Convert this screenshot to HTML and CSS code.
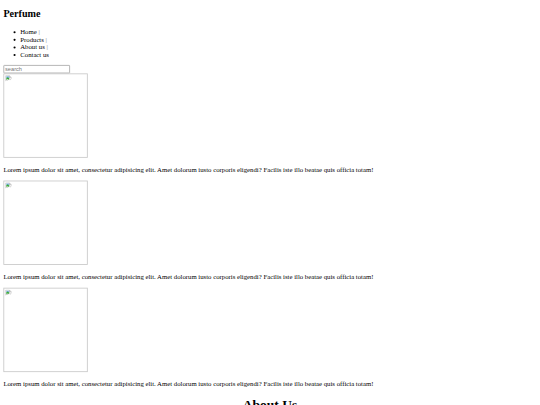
FILE: index.html
```html
<!DOCTYPE html>
<html>
<head>
<meta charset="utf-8">
<title>Perfume</title>
<link rel="stylesheet" href="styles.css">
</head>
<body>
<div class="page">
<header class="site-header">
  <h2 class="brand">Perfume</h2>
  <ul class="nav">
    <li>Home <span class="sep">|</span></li>
    <li>Products <span class="sep">|</span></li>
    <li>About us <span class="sep">|</span></li>
    <li>Contact us</li>
  </ul>
  <input class="search" type="text" placeholder="search">
</header>
<main>
  <div class="product">
    <div class="img-line"><div class="broken"><svg class="broken-icon" viewBox="0 0 16 16" width="16" height="16"><path d="M1.5 1.5h9l4 4v4l-3 2-2-2-3 3-2-1.5-3 2.5z" fill="#fff" stroke="#9a9a9a"/><path d="M3 3h7v4H3z" fill="#7fb2e6"/><path d="M3 7l2.5-2 2.5 2 2-1.5V9L7.5 11l-2-1.5L3 11.5z" fill="#3ea83a"/><path d="M10.5 1.5v4h4" fill="#ddd" stroke="#9a9a9a"/></svg></div></div>
    <p class="desc">Lorem ipsum dolor sit amet, consectetur adipisicing elit. Amet dolorum iusto corporis eligendi? Facilis iste illo beatae quis officia totam!</p>
  </div>
  <div class="product">
    <div class="img-line"><div class="broken"><svg class="broken-icon" viewBox="0 0 16 16" width="16" height="16"><path d="M1.5 1.5h9l4 4v4l-3 2-2-2-3 3-2-1.5-3 2.5z" fill="#fff" stroke="#9a9a9a"/><path d="M3 3h7v4H3z" fill="#7fb2e6"/><path d="M3 7l2.5-2 2.5 2 2-1.5V9L7.5 11l-2-1.5L3 11.5z" fill="#3ea83a"/><path d="M10.5 1.5v4h4" fill="#ddd" stroke="#9a9a9a"/></svg></div></div>
    <p class="desc">Lorem ipsum dolor sit amet, consectetur adipisicing elit. Amet dolorum iusto corporis eligendi? Facilis iste illo beatae quis officia totam!</p>
  </div>
  <div class="product">
    <div class="img-line"><div class="broken"><svg class="broken-icon" viewBox="0 0 16 16" width="16" height="16"><path d="M1.5 1.5h9l4 4v4l-3 2-2-2-3 3-2-1.5-3 2.5z" fill="#fff" stroke="#9a9a9a"/><path d="M3 3h7v4H3z" fill="#7fb2e6"/><path d="M3 7l2.5-2 2.5 2 2-1.5V9L7.5 11l-2-1.5L3 11.5z" fill="#3ea83a"/><path d="M10.5 1.5v4h4" fill="#ddd" stroke="#9a9a9a"/></svg></div></div>
    <p class="desc">Lorem ipsum dolor sit amet, consectetur adipisicing elit. Amet dolorum iusto corporis eligendi? Facilis iste illo beatae quis officia totam!</p>
  </div>
  <section class="about">
    <h1 class="about-title">About Us</h1>
  </section>
</main>
</div>
</body>
</html>
```
FILE: styles.css
```css
html, body {
  margin: 0;
  padding: 0;
  overflow: hidden;
  background: #fff;
}
.page {
  display: flow-root;
  box-sizing: border-box;
  width: 1280px;
  padding: 0 8px;
  transform: scale(0.421875);
  transform-origin: 0 0;
  font-family: "Liberation Serif", "Times New Roman", serif;
  font-size: 16px;
  color: #000;
}
.brand {
  font-size: 1.5em;
  font-weight: bold;
  margin: 0.83em 0;
}
.nav {
  margin: 16px 0 15px;
  padding-left: 40px;
  list-style: disc;
}
.sep {
  color: #777;
}
.search {
  display: block;
  box-sizing: border-box;
  width: 158px;
  height: 20px;
  font-family: "Liberation Sans", Arial, sans-serif;
  font-size: 13.333px;
  padding: 1px 2px;
  border: 2px solid #a9a9a9;
  border-radius: 2px;
  margin: 0;
}
.search::placeholder {
  color: #757575;
}
.img-line {
  padding-bottom: 4px;
}
.broken {
  box-sizing: border-box;
  width: 200px;
  height: 200px;
  border: 2px solid #c8c8c8;
  padding: 2px;
}
.broken-icon {
  display: block;
}
.desc {
  margin: 16px 0;
}
.about {
  text-align: center;
}
.about-title {
  font-size: 2em;
  margin: 0.67em 0;
}
```
